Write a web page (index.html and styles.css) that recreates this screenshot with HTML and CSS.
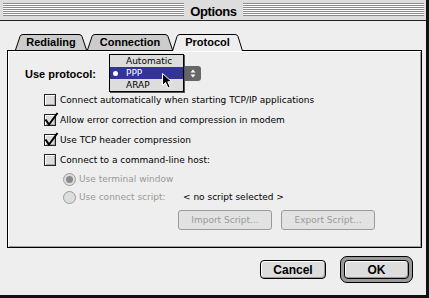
FILE: index.html
```html
<!DOCTYPE html>
<html lang="en">
<head>
  <meta charset="UTF-8">
  <title>Options</title>
  <link rel="stylesheet" href="styles.css">
</head>
<body>
  <div class="window">
    <!-- Title bar -->
    <div class="titlebar">
      <span class="stripes"></span>
      <span class="title">Options</span>
      <span class="stripes"></span>
    </div>

    <div class="content">
      <div class="tabs">
        <div class="tab tab-redial">
          <svg width="72" height="17" viewBox="0 0 72 17"><path d="M0.5 16 L5 2.5 Q5.7 0.5 8 0.5 L64 0.5 Q66.3 0.5 67 2.5 L71.5 16"/></svg>
          <span>Redialing</span>
        </div>
        <div class="tab tab-conn">
          <svg width="86" height="17" viewBox="0 0 86 17"><path d="M0.5 16 L5 2.5 Q5.7 0.5 8 0.5 L78 0.5 Q80.3 0.5 81 2.5 L85.5 16"/></svg>
          <span>Connection</span>
        </div>
        <div class="tab tab-proto front">
          <svg width="71" height="17" viewBox="0 0 71 17"><path d="M0.5 17 L5 2.5 Q5.7 0.5 8 0.5 L63 0.5 Q65.3 0.5 66 2.5 L70.5 17"/></svg>
          <span>Protocol</span>
        </div>
      </div>

      <div class="panel">
        <div class="protocol-row">
          <span class="label">Use protocol:</span>
          <div class="popup">
            <span class="popup-arrows">
              <svg width="16" height="15" viewBox="0 0 16 15">
                <polygon points="5.5,6.5 10.5,6.5 8,3.5" fill="#fff"/>
                <polygon points="5.5,8.5 10.5,8.5 8,11.5" fill="#fff"/>
              </svg>
            </span>
            <ul class="menu">
              <li><span class="mark"></span>Automatic</li>
              <li class="selected"><span class="mark"><i class="dot"></i></span>PPP</li>
              <li><span class="mark"></span>ARAP</li>
            </ul>
          </div>
        </div>

        <div class="checks">
          <div class="check"><span class="box"></span>Connect automatically when starting TCP/IP applications</div>
          <div class="check"><span class="box"><svg class="tick" width="16" height="16" viewBox="0 0 16 16"><path d="M1.5 8.5 L5 13.5 L13.5 2"/></svg></span>Allow error correction and compression in modem</div>
          <div class="check"><span class="box"><svg class="tick" width="16" height="16" viewBox="0 0 16 16"><path d="M1.5 8.5 L5 13.5 L13.5 2"/></svg></span>Use TCP header compression</div>
          <div class="check"><span class="box"></span>Connect to a command-line host:</div>
        </div>

        <div class="radios">
          <div class="radio disabled"><span class="circle on"></span>Use terminal window</div>
          <div class="radio disabled"><span class="circle"></span><span class="script-label">Use connect script:</span><span class="script-name">&lt; no script selected &gt;</span></div>
        </div>

        <div class="script-buttons">
          <button class="small-btn" disabled>Import Script...</button>
          <button class="small-btn" disabled>Export Script...</button>
        </div>
      </div>

      <div class="dialog-buttons">
        <button class="btn">Cancel</button>
        <div class="default-ring"><button class="btn">OK</button></div>
      </div>
    </div>

    <!-- mouse pointer over the menu -->
    <svg class="cursor" width="12" height="17" viewBox="0 0 12 17">
      <path d="M1.5 1.5 V13.5 L4.5 10.5 L7 16 L9.2 15 L6.8 9.8 L10.8 9.8 Z" fill="#000" stroke="#fff" stroke-width="1"/>
    </svg>
  </div>
</body>
</html>
```

FILE: styles.css
```css
body {
  margin: 0;
  background: #eeeeee;
  font-family: "DejaVu Sans", sans-serif;
  font-size: 9px;
  color: #000;
}

.window {
  position: relative;
  width: 429px;
  height: 298px;
  box-sizing: border-box;
  background: #eeeeee;
  border-right: 3px solid #111;
  border-bottom: 3px solid #111;
  overflow: hidden;
}

.titlebar {
  display: flex;
  align-items: flex-start;
  height: 17px;
  padding: 3px 2px 0 3px;
  background: #dddddd;
  border-bottom: 1px solid #222;
}

.stripes {
  flex: 1;
  height: 13px;
  background: repeating-linear-gradient(to bottom, #8a8a8a 0 1px, #ffffff 1px 2px);
}

.title {
  padding: 2px 6px 0;
  font: bold 13px "Liberation Sans", sans-serif;
  line-height: 14px;
  letter-spacing: -0.4px;
}

.content {
  padding: 13px 4px 0 7px;
}

/* Tabs */
.tabs {
  display: flex;
  position: relative;
  z-index: 1;
  height: 17px;
  margin: 0 0 -1px 8px;
}

.tab {
  position: relative;
  height: 17px;
  font: bold 11px "Liberation Sans", sans-serif;
  line-height: 17px;
  text-align: center;
}

.tab svg {
  position: absolute;
  left: 0;
  top: 0;
}

.tab svg path {
  fill: #cccccc;
  stroke: #000;
  stroke-width: 1;
}

.tab.front svg path {
  fill: #eeeeee;
}

.tab span {
  position: relative;
}

.tab-redial { width: 72px; }
.tab-conn { width: 86px; }
.tab-proto { width: 71px; margin-left: -1px; }

/* Panel */
.panel {
  height: 198px;
  box-sizing: border-box;
  border: 1px solid #000;
  box-shadow: inset 1px 1px #ffffff, inset -1px -1px #a0a0a0;
  padding: 15px 0 0 17px;
}

.protocol-row {
  display: flex;
  align-items: center;
  height: 15px;
}

.protocol-row .label {
  width: 85px;
  font: bold 11px "Liberation Sans", sans-serif;
}

.popup {
  position: relative;
  display: flex;
  justify-content: flex-end;
  width: 91px;
  height: 15px;
}

.popup-arrows {
  display: block;
  width: 16px;
  height: 15px;
  background: #666666;
  border-radius: 0 3px 3px 0;
}

.popup-arrows svg {
  display: block;
}

.menu {
  position: absolute;
  left: -1px;
  top: -12px;
  width: 75px;
  box-sizing: border-box;
  margin: 0;
  padding: 0;
  list-style: none;
  background: #dddddd;
  border: 1px solid #000;
  box-shadow: 1px 1px 0 #555;
}

.menu li {
  display: flex;
  align-items: center;
  height: 12px;
  line-height: 12px;
}

.menu li.selected {
  background: #333399;
  color: #fff;
}

.menu .mark {
  display: flex;
  align-items: center;
  width: 16px;
  height: 12px;
}

.menu .dot {
  width: 5px;
  height: 5px;
  margin-left: 3px;
  border-radius: 50%;
  background: #fff;
}

/* Checkboxes */
.checks {
  margin: 9px 0 0 19px;
}

.check {
  display: flex;
  align-items: center;
  gap: 4px;
  height: 20px;
}

.box {
  position: relative;
  width: 12px;
  height: 12px;
  box-sizing: border-box;
  border: 1px solid #222;
  background: #dddddd;
  box-shadow: inset 1px 1px #ffffff, inset -1px -1px #a8a8a8;
}

.tick {
  position: absolute;
  left: -1px;
  top: -4px;
}

.tick path {
  fill: none;
  stroke: #000;
  stroke-width: 2;
}

/* Radios */
.radios {
  margin-left: 38px;
}

.radio {
  display: flex;
  align-items: center;
  gap: 3px;
  height: 18px;
}

.radio.disabled {
  color: #999;
}

.circle {
  display: flex;
  align-items: center;
  justify-content: center;
  width: 13px;
  height: 13px;
  box-sizing: border-box;
  border: 1px solid #9a9a9a;
  border-radius: 50%;
  background: #dddddd;
}

.circle.on::after {
  content: "";
  width: 7px;
  height: 7px;
  border-radius: 50%;
  background: #8a8a8a;
}

.script-label {
  width: 101px;
}

.script-name {
  color: #000;
}

.script-buttons {
  display: flex;
  gap: 9px;
  margin: 4px 0 0 153px;
}

.small-btn {
  width: 94px;
  height: 20px;
  padding: 0;
  font-family: "DejaVu Sans", sans-serif;
  font-size: 9px;
  color: #999;
  background: #e2e2e2;
  border: 1px solid #9a9a9a;
  border-radius: 3px;
}

/* Dialog buttons */
.dialog-buttons {
  display: flex;
  justify-content: flex-end;
  align-items: center;
  gap: 14px;
  margin-top: 8px;
  padding-right: 9px;
}

.btn {
  width: 66px;
  height: 19px;
  padding: 0;
  font: bold 12px "Liberation Sans", sans-serif;
  color: #000;
  background: #dddddd;
  border: 1px solid #000;
  border-radius: 4px;
  box-shadow: inset 1px 1px #ffffff, inset -1px -1px #999999;
}

.default-ring {
  display: flex;
  padding: 3px;
  border: 1px solid #000;
  border-radius: 7px;
  background: #999999;
}

.default-ring .btn {
  width: 65px;
}

.cursor {
  position: absolute;
  left: 161px;
  top: 72px;
}
```
